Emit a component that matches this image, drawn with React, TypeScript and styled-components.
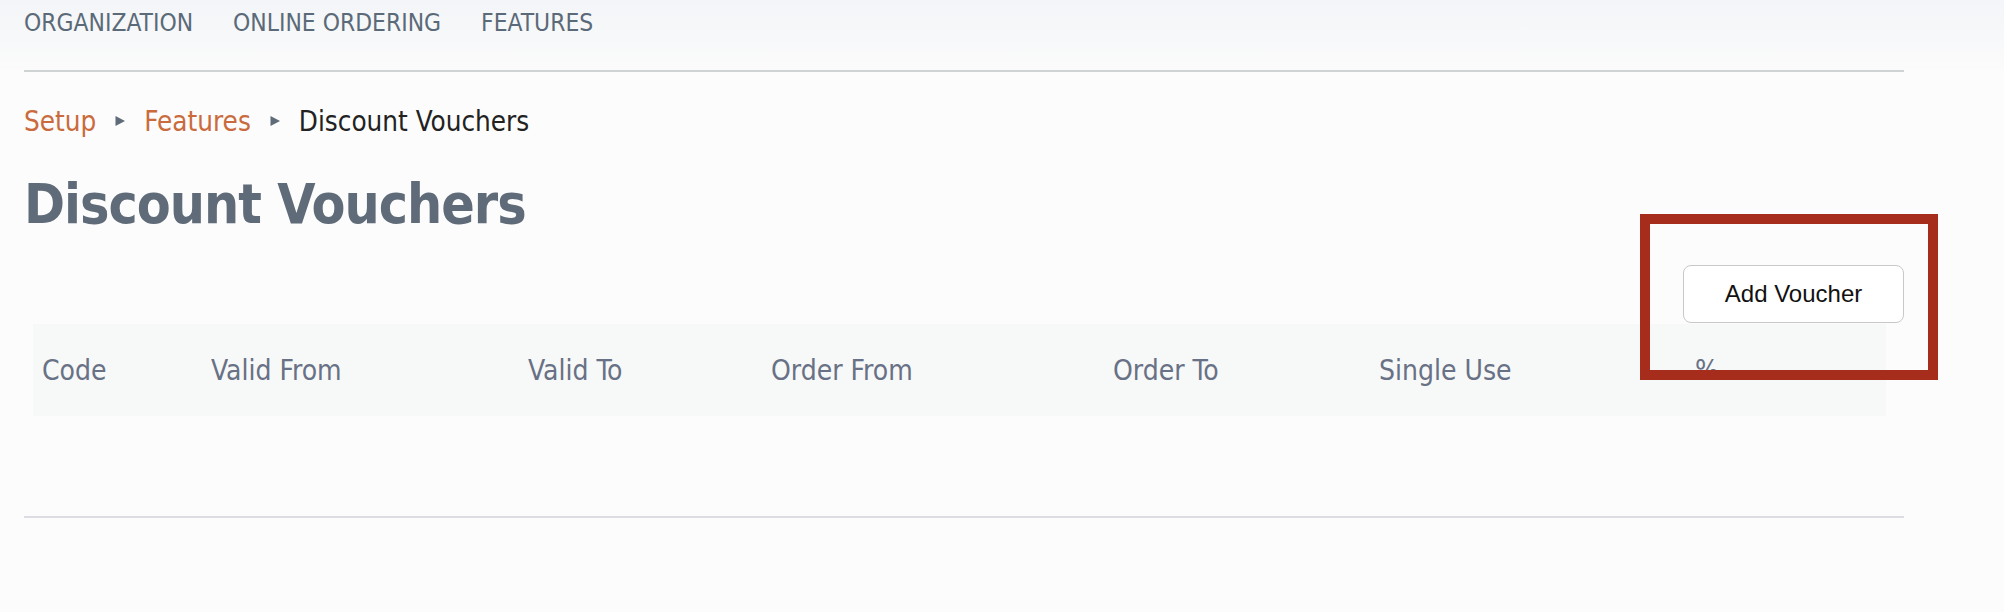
import styled, { createGlobalStyle } from "styled-components";

const GlobalStyle = createGlobalStyle`
  body {
    margin: 0;
    background-color: #fcfcfc;
    font-family: Tahoma, "DejaVu Sans Condensed", "DejaVu Sans", sans-serif;
  }
`;

const Page = styled.div`
  position: relative;
  width: 2004px;
  min-height: 612px;
`;

const TopBar = styled.div`
  height: 70px;
  background: linear-gradient(180deg, #f3f5f8 0%, #fbfbfb 100%);
`;

const Nav = styled.nav`
  display: flex;
  align-items: center;
  gap: 40px;
  height: 44px;
  padding-left: 24px;
`;

const NavItem = styled.a`
  font-size: 24.4px;
  color: #5b6a78;
  text-decoration: none;
  text-transform: uppercase;
`;

const Main = styled.div`
  width: 1880px;
  padding-left: 24px;
`;

const Rule = styled.div<{ tone: string }>`
  height: 2px;
  background-color: ${(props) => props.tone};
`;

const Crumbs = styled.div`
  display: flex;
  align-items: center;
  height: 40px;
  margin-top: 29px;
  font-size: 27.6px;
`;

const Crumb = styled.a<{ current?: boolean }>`
  color: ${(props) => (props.current ? "#222222" : "#c96b3c")};
  text-decoration: none;
`;

const Arrow = styled.svg`
  width: 10px;
  height: 12px;
  margin: 0 19px 0 19px;
  fill: #5f6b78;
`;

const Title = styled.h1`
  margin: 31px 0 0;
  font-size: 55px;
  line-height: 64px;
  letter-spacing: -1px;
  font-weight: bold;
  color: #5f6b78;
`;

const Actions = styled.div`
  display: flex;
  justify-content: flex-end;
  margin-top: 29px;
`;

const Button = styled.button`
  width: 221px;
  height: 58px;
  border: 1px solid #c8c8c8;
  border-radius: 8px;
  background-color: #ffffff;
  font-family: "Liberation Sans", Arial, sans-serif;
  font-size: 24px;
  color: #111111;
`;

const TableHead = styled.div`
  display: grid;
  grid-template-columns: 169px 317px 243px 342px 266px 316px 1fr;
  align-items: center;
  height: 92px;
  margin: 1px 18px 0 9px;
  padding-left: 9px;
  background-color: #f7f8f8;
`;

const HeadCell = styled.div`
  font-size: 28px;
  color: #687185;
`;

const BottomRule = styled(Rule)`
  margin-top: 100px;
`;

const Highlight = styled.div`
  position: absolute;
  left: 1640px;
  top: 214px;
  width: 298px;
  height: 166px;
  box-sizing: border-box;
  border: 10px solid #a62c1c;
  pointer-events: none;
`;

const columns = ["Code", "Valid From", "Valid To", "Order From", "Order To", "Single Use", "%"];

const Caret = () => (
  <Arrow viewBox="0 0 10 12">
    <polygon points="0.5,1 10,6 0.5,11" />
  </Arrow>
);

export default () => {
  return (
    <Page>
      <GlobalStyle />
      <TopBar>
        <Nav>
          <NavItem>Organization</NavItem>
          <NavItem>Online Ordering</NavItem>
          <NavItem>Features</NavItem>
        </Nav>
      </TopBar>
      <Main>
        <Rule tone="#d0d3d4" />
        <Crumbs>
          <Crumb>Setup</Crumb>
          <Caret />
          <Crumb>Features</Crumb>
          <Caret />
          <Crumb current>Discount Vouchers</Crumb>
        </Crumbs>
        <Title>Discount Vouchers</Title>
        <Actions>
          <Button>Add Voucher</Button>
        </Actions>
        <TableHead>
          {columns.map((c) => (
            <HeadCell key={c}>{c}</HeadCell>
          ))}
        </TableHead>
        <BottomRule tone="#dcdde3" />
      </Main>
      <Highlight />
    </Page>
  );
};
